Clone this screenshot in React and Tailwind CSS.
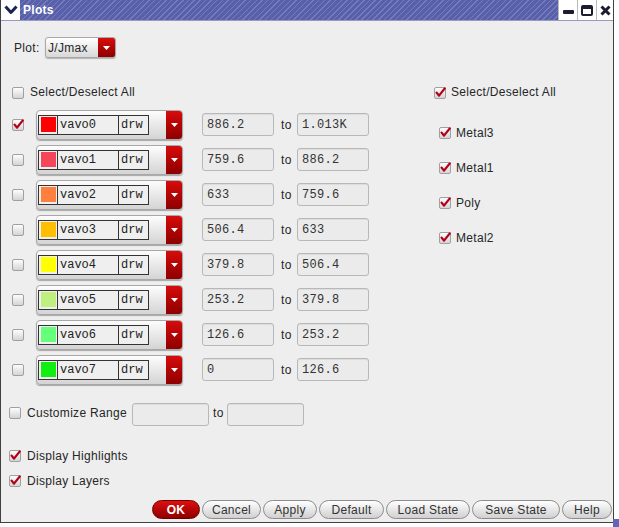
import React from 'react';

const rows = [
  { name: 'vavo0', sw: 'bg-[#ff0000]', from: '886.2', to: '1.013K', checked: true },
  { name: 'vavo1', sw: 'bg-[#f5455a]', from: '759.6', to: '886.2' },
  { name: 'vavo2', sw: 'bg-[#ff7f3f]', from: '633', to: '759.6' },
  { name: 'vavo3', sw: 'bg-[#ffbf00]', from: '506.4', to: '633' },
  { name: 'vavo4', sw: 'bg-[#ffff00]', from: '379.8', to: '506.4' },
  { name: 'vavo5', sw: 'bg-[#bfef7f]', from: '253.2', to: '379.8' },
  { name: 'vavo6', sw: 'bg-[#66ff7a]', from: '126.6', to: '253.2' },
  { name: 'vavo7', sw: 'bg-[#11ee11]', from: '0', to: '126.6' },
];

const layers = ['Metal3', 'Metal1', 'Poly', 'Metal2'];

function Check({ checked }) {
  return (
    <svg width="13" height="13" viewBox="0 0 13 13" className="shrink-0">
      <defs>
        <linearGradient id="cbg" x1="0" y1="0" x2="0" y2="1">
          <stop offset="0" stopColor="#ffffff" />
          <stop offset="1" stopColor="#d2d2d2" />
        </linearGradient>
      </defs>
      <rect x="0.5" y="1.5" width="11" height="11" rx="1.5" fill="url(#cbg)" stroke="#a0a0a0" />
      {checked && (
        <path d="M2.6 6.6 L5 9.6 L10.8 2.4" stroke="#b30018" strokeWidth="2.3" fill="none" strokeLinecap="round" strokeLinejoin="round" />
      )}
    </svg>
  );
}

function RedArrow({ className }) {
  return (
    <div className={'flex items-center justify-center bg-gradient-to-b from-[#d80c0c] to-[#8e0000] ' + className}>
      <svg width="7" height="4" viewBox="0 0 7 4"><path d="M0 0H7L3.5 4Z" fill="#ffffff" /></svg>
    </div>
  );
}

function Field({ value, w = 'w-[72px]', h = 'h-[23px]' }) {
  return (
    <div className={'flex items-center rounded-[3px] border border-[#b8b8b8] bg-[#ebebeb] pl-[4px] font-["Liberation_Mono",monospace] text-[12px] text-[#333] shadow-[inset_0_1px_0_rgba(0,0,0,0.06)] ' + w + ' ' + h}>
      {value}
    </div>
  );
}

function Btn({ children, w, ok }) {
  if (ok) {
    return (
      <div className={'flex h-[19px] items-center justify-center rounded-full border border-[#6a0000] bg-gradient-to-b from-[#e01010] to-[#8e0000] text-[12px] font-bold text-white ' + w}>
        {children}
      </div>
    );
  }
  return (
    <div className={'flex h-[19px] items-center justify-center rounded-full border border-[#8c8c8c] bg-gradient-to-b from-[#ffffff] to-[#d0d0d0] text-[12px] text-[#333] ' + w}>
      {children}
    </div>
  );
}

export default function App() {
  return (
    <div className="relative h-[527px] w-[619px] overflow-hidden bg-white font-['Liberation_Sans',Arial,sans-serif] tracking-[0.3px] text-[#262626]">
      <div className="flex h-[523px] w-[614px] flex-col border-b border-l border-r border-[#404040]">
        {/* title bar */}
        <div className="flex h-[21px] shrink-0 border-b border-[#9a9ac0]">
          <div className="flex w-[19px] items-center justify-center bg-white">
            <svg width="14" height="10" viewBox="0 0 14 10"><path d="M1.5 1.5 L7 7.5 L12.5 1.5" stroke="#1c2350" strokeWidth="3" fill="none" strokeLinejoin="round" /></svg>
          </div>
          <div className="flex flex-1 items-center bg-[repeating-linear-gradient(135deg,#5860aa_0px,#5860aa_3px,#757bbd_3px,#757bbd_4px)] pl-[3px] text-[12px] font-bold text-white">
            Plots
          </div>
          <div className="flex w-[19px] items-center justify-center border-l border-[#bbb] bg-white">
            <div className="mt-[4px] h-[4px] w-[11px] rounded-[1px] bg-[#1c1c30]" />
          </div>
          <div className="flex w-[19px] items-center justify-center border-l border-[#bbb] bg-white">
            <div className="h-[11px] w-[12px] rounded-[2px] border-[2px] border-t-[4px] border-[#1c1c30]" />
          </div>
          <div className="flex w-[17px] items-center justify-center border-l border-[#bbb] bg-white">
            <svg width="11" height="11" viewBox="0 0 11 11"><path d="M1.5 1.5 L9.5 9.5 M9.5 1.5 L1.5 9.5" stroke="#1c1c30" strokeWidth="3" /></svg>
          </div>
        </div>

        {/* body */}
        <div className="flex flex-1 flex-col bg-[#eeeeee] pt-[16px]">
          {/* Plot row */}
          <div className="flex h-[21px] items-center">
            <span className="ml-[13px] w-[31px] text-[12px]">Plot:</span>
            <div className="flex h-[21px] w-[71px] overflow-hidden rounded-[3px] border border-[#a8a8a8] bg-gradient-to-b from-[#ffffff] to-[#d8d8d8] shadow-[0_1px_1px_rgba(0,0,0,0.25)]">
              <div className="flex flex-1 items-center pl-[2px] text-[12px]">J/Jmax</div>
              <RedArrow className="w-[17px]" />
            </div>
          </div>

          {/* main two columns */}
          <div className="mt-[22px] flex">
            <div className="w-[420px]">
              <div className="flex h-[24px] items-center">
                <div className="ml-[11px]"><Check /></div>
                <span className="ml-[5px] text-[12px]">Select/Deselect All</span>
              </div>
              <div className="mt-[3px]">
                {rows.map((r) => (
                  <div key={r.name} className="flex h-[35px] items-center">
                    <div className="ml-[11px]"><Check checked={r.checked} /></div>
                    <div className="ml-[11px] flex h-[30px] w-[147px] overflow-hidden rounded-[4px] border border-[#a8a8a8] bg-gradient-to-b from-[#fdfdfd] to-[#d4d4d4] shadow-[0_1px_1px_rgba(0,0,0,0.3)]">
                      <div className="flex flex-1 items-center pl-[1px]">
                        <div className="flex h-[20px] w-[111px] border border-[#333] bg-[#efefef] font-['Liberation_Mono',monospace] text-[12px] tracking-normal text-[#222]">
                          <div className="flex w-[19px] items-center justify-center border-r border-[#333]">
                            <div className={'h-[15px] w-[15px] ' + r.sw} />
                          </div>
                          <div className="flex w-[61px] items-center border-r border-[#333] pl-[2px]">{r.name}</div>
                          <div className="flex flex-1 items-center pl-[2px]">drw</div>
                        </div>
                      </div>
                      <RedArrow className="w-[16px]" />
                    </div>
                    <div className="ml-[19px]"><Field value={r.from} /></div>
                    <div className="w-[23px] pl-[7px] text-[12px]">to</div>
                    <Field value={r.to} />
                  </div>
                ))}
              </div>
            </div>
            <div className="flex-1">
              <div className="flex h-[24px] items-center">
                <div className="ml-[13px]"><Check checked /></div>
                <span className="ml-[4px] text-[12px]">Select/Deselect All</span>
              </div>
              <div className="mt-[11px]">
                {layers.map((l) => (
                  <div key={l} className="flex h-[35px] items-center">
                    <div className="ml-[18px]"><Check checked /></div>
                    <span className="ml-[4px] text-[12px]">{l}</span>
                  </div>
                ))}
              </div>
            </div>
          </div>

          {/* customize range */}
          <div className="mt-[15px] flex h-[25px] items-center">
            <div className="mb-[4px] ml-[8px]"><Check /></div>
            <span className="mb-[4px] ml-[5px] w-[105px] text-[12px]">Customize Range</span>
            <Field value="" w="w-[77px]" h="h-[23px]" />
            <div className="mb-[4px] w-[18px] pl-[4px] text-[12px]">to</div>
            <Field value="" w="w-[77px]" h="h-[23px]" />
          </div>

          <div className="mt-[16px] flex h-[25px] items-center">
            <div className="ml-[8px]"><Check checked /></div>
            <span className="ml-[5px] text-[12px]">Display Highlights</span>
          </div>
          <div className="flex h-[25px] items-center">
            <div className="ml-[8px]"><Check checked /></div>
            <span className="ml-[5px] text-[12px]">Display Layers</span>
          </div>

          {/* buttons */}
          <div className="mt-[7px] ml-[151px] flex gap-[2px]">
            <Btn ok w="w-[48px]">OK</Btn>
            <Btn w="w-[59px]">Cancel</Btn>
            <Btn w="w-[54px]">Apply</Btn>
            <Btn w="w-[65px]">Default</Btn>
            <Btn w="w-[84px]">Load State</Btn>
            <Btn w="w-[88px]">Save State</Btn>
            <Btn w="w-[50px]">Help</Btn>
          </div>
        </div>
      </div>
      <div className="absolute bottom-0 right-0 h-[8px] w-[6px] bg-[#6464b4]" />
    </div>
  );
}
